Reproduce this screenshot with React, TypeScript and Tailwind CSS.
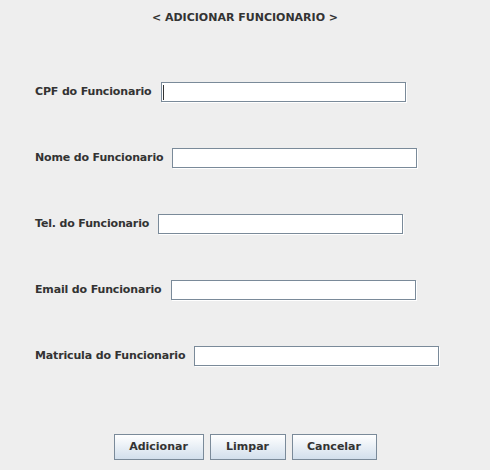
import React from "react";

const fields = [
  "CPF do Funcionario",
  "Nome do Funcionario",
  "Tel. do Funcionario",
  "Email do Funcionario",
  "Matricula do Funcionario",
];

function Field({ focused }: { focused?: boolean }) {
  return (
    <div className="relative w-[245px] h-[20px] bg-white border border-[#7a8a99] shadow-[1px_1px_0_#ffffff]">
      {focused && <div className="absolute left-[1px] top-[2px] w-[1px] h-[15px] bg-[#333]" />}
    </div>
  );
}

function Button({ label, w }: { label: string; w: string }) {
  return (
    <button
      className={`${w} h-[26px] border border-[#7a8a99] bg-gradient-to-b from-[#ffffff] to-[#d2dfec] text-[11px] font-bold text-[#333]`}
    >
      {label}
    </button>
  );
}

export default function App() {
  return (
    <div
      className="w-[490px] h-[470px] bg-[#eeeeee] text-[#333333] flex flex-col"
      style={{ fontFamily: '"DejaVu Sans", sans-serif' }}
    >
      <div className="text-center text-[11px] font-bold pt-[11px] leading-[14px]">
        &lt; ADICIONAR FUNCIONARIO &gt;
      </div>
      <div className="flex flex-col gap-[46px] pl-[35px] mt-[57px]">
        {fields.map((f, i) => (
          <div key={f} className="flex items-center gap-[9px] h-[20px]">
            <span className="text-[11px] font-bold tracking-[-0.15px] pt-[1px]">{f}</span>
            <Field focused={i === 0} />
          </div>
        ))}
      </div>
      <div className="flex justify-center gap-[6px] mt-[68px]">
        <Button label="Adicionar" w="w-[90px]" />
        <Button label="Limpar" w="w-[76px]" />
        <Button label="Cancelar" w="w-[85px]" />
      </div>
    </div>
  );
}
